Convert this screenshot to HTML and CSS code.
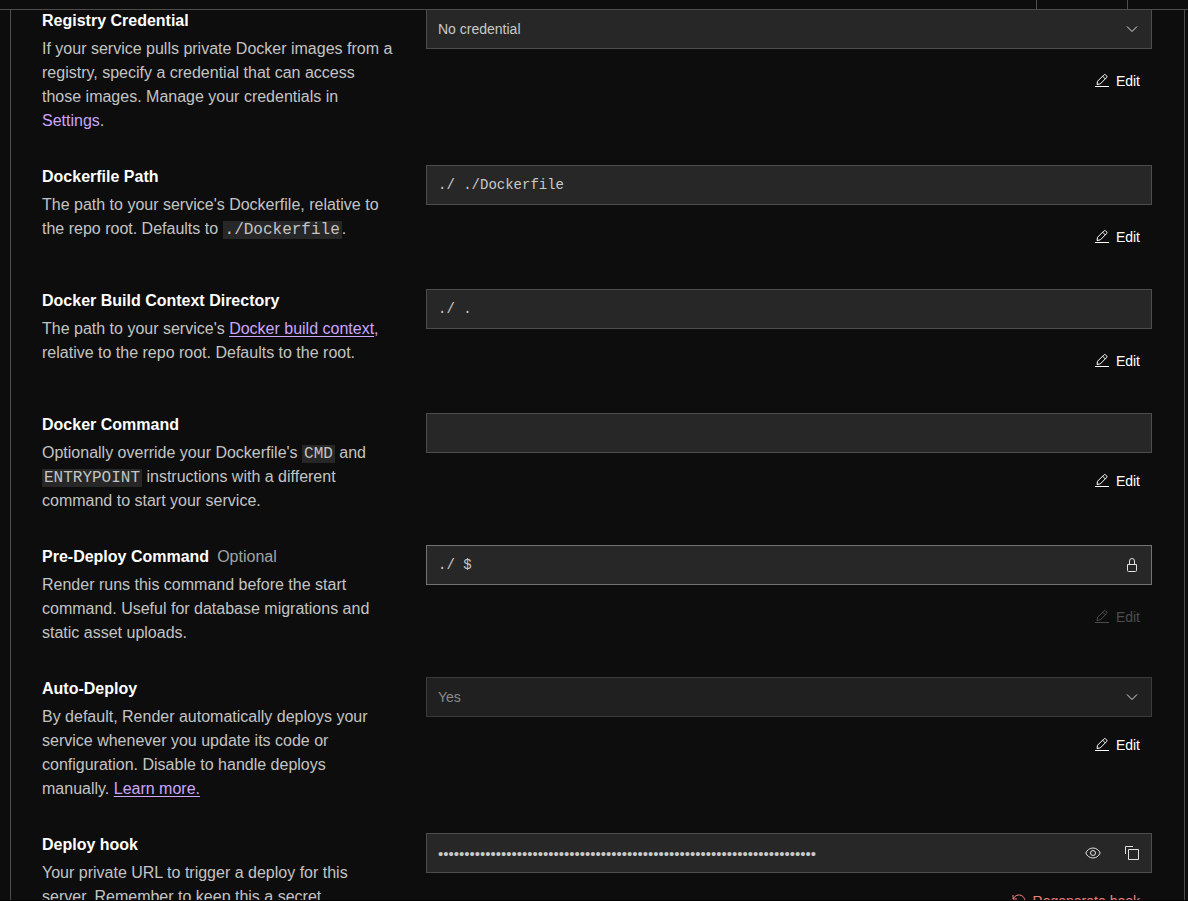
FILE: index.html
```
<!DOCTYPE html>
<html lang="en">
<head>
<meta charset="utf-8">
<meta name="viewport" content="width=device-width, initial-scale=1">
<title>Service settings</title>
<link rel="stylesheet" href="styles.css">
</head>
<body>
<svg class="sprite" aria-hidden="true">
  <symbol id="pencil" viewBox="0 0 16 16"><path d="M1 13.500h14M3 11.500l.6-3.300 6.300-6.300a1.200 1.200 0 0 1 1.700 0l1 1a1.200 1.200 0 0 1 0 1.700l-6.300 6.300zM8.600 3.200l2.700 2.700"/></symbol>
  <symbol id="chevron" viewBox="0 0 16 16"><path d="M3 5.500l5 5 5-5"/></symbol>
  <symbol id="lock" viewBox="0 0 16 16"><path d="M3.500 7.500h9v6a1 1 0 0 1-1 1h-7a1 1 0 0 1-1-1zM5.500 7.500V4a2.500 2.500 0 0 1 5 0v3.500"/></symbol>
  <symbol id="eye" viewBox="0 0 16 16"><path d="M.8 8C2 5 4.800 3 8 3s6 2 7.200 5C14 11 11.200 13 8 13S2 11 .8 8z"/><circle cx="8" cy="8" r="2.500"/></symbol>
  <symbol id="copy" viewBox="0 0 16 16"><path d="M4.500 4.500h10v10h-10zM1.500 9V1.500H9"/></symbol>
  <symbol id="reload" viewBox="0 0 16 16"><path d="M2 2v4h4M2.300 5.800A6 6 0 1 1 3.500 12"/></symbol>
</svg>

<header class="topbar"><div class="topbar-item"></div></header>

<main class="viewport">
  <form class="panel">
    <section class="row">
      <div class="info">
        <label class="title" for="registry">Registry Credential</label>
        <p class="text">If your service pulls private Docker images from a registry, specify a credential that can access those images. Manage your credentials in <a class="link plain" href="#settings">Settings</a>.</p>
      </div>
      <div class="control">
        <div class="field pick">
          <select class="value" id="registry"><option>No credential</option></select>
          <svg class="icon chevron"><use href="#chevron"/></svg>
        </div>
        <button class="action" type="button"><svg class="icon"><use href="#pencil"/></svg>Edit</button>
      </div>
    </section>

    <section class="row">
      <div class="info">
        <label class="title" for="dockerfile">Dockerfile Path</label>
        <p class="text">The path to your service's Dockerfile, relative to the repo root. Defaults to <code class="code">./Dockerfile</code>.</p>
      </div>
      <div class="control">
        <div class="field"><input class="value mono" id="dockerfile" value="./ ./Dockerfile" readonly></div>
        <button class="action" type="button"><svg class="icon"><use href="#pencil"/></svg>Edit</button>
      </div>
    </section>

    <section class="row">
      <div class="info">
        <label class="title" for="context">Docker Build Context Directory</label>
        <p class="text">The path to your service's <a class="link" href="#context-docs">Docker build context</a><span class="accent">,</span> relative to the repo root. Defaults to the root.</p>
      </div>
      <div class="control">
        <div class="field"><input class="value mono" id="context" value="./ ." readonly></div>
        <button class="action" type="button"><svg class="icon"><use href="#pencil"/></svg>Edit</button>
      </div>
    </section>

    <section class="row">
      <div class="info">
        <label class="title" for="command">Docker Command</label>
        <p class="text">Optionally override your Dockerfile's <code class="code">CMD</code> and <code class="code">ENTRYPOINT</code> instructions with a different command to start your service.</p>
      </div>
      <div class="control tight">
        <div class="field"><input class="value mono" id="command" readonly></div>
        <button class="action" type="button"><svg class="icon"><use href="#pencil"/></svg>Edit</button>
      </div>
    </section>

    <section class="row">
      <div class="info">
        <div class="heading"><label class="title" for="predeploy">Pre-Deploy Command</label><span class="optional">Optional</span></div>
        <p class="text">Render runs this command before the start command. Useful for database migrations and static asset uploads.</p>
      </div>
      <div class="control">
        <div class="field locked">
          <input class="value mono" id="predeploy" value="./ $" readonly>
          <svg class="icon trailing"><use href="#lock"/></svg>
        </div>
        <button class="action" type="button" disabled><svg class="icon"><use href="#pencil"/></svg>Edit</button>
      </div>
    </section>

    <section class="row">
      <div class="info">
        <label class="title" for="autodeploy">Auto-Deploy</label>
        <p class="text">By default, Render automatically deploys your service whenever you update its code or configuration. Disable to handle deploys manually. <a class="link" href="#deploy-docs">Learn more.</a></p>
      </div>
      <div class="control tight">
        <div class="field pick muted">
          <select class="value" id="autodeploy" disabled><option>Yes</option></select>
          <svg class="icon chevron"><use href="#chevron"/></svg>
        </div>
        <button class="action" type="button"><svg class="icon"><use href="#pencil"/></svg>Edit</button>
      </div>
    </section>

    <section class="row">
      <div class="info">
        <label class="title" for="hook">Deploy hook</label>
        <p class="text">Your private URL to trigger a deploy for this server. Remember to keep this a secret.</p>
      </div>
      <div class="control tight">
        <div class="field">
          <input class="value secret" type="password" id="hook" value="https://api.example.com/deploy/srv-0123456789abcdefghij?key=abcdefghijkl" readonly>
          <button class="icon-button" type="button" aria-label="Show deploy hook"><svg class="icon"><use href="#eye"/></svg></button>
          <button class="icon-button" type="button" aria-label="Copy deploy hook"><svg class="icon"><use href="#copy"/></svg></button>
        </div>
        <button class="action danger" type="button"><svg class="icon"><use href="#reload"/></svg>Regenerate hook</button>
      </div>
    </section>
  </form>
</main>
</body>
</html>
```

FILE: styles.css
```
* { box-sizing: border-box; }

body {
  margin: 0;
  height: 100vh;
  display: flex;
  flex-direction: column;
  overflow: hidden;
  background: #0d0d0d;
  color: #c4c4c4;
  border-bottom: 1px solid #000;
  font-family: "Liberation Sans", Arial, sans-serif;
  font-size: 16px;
  line-height: 24px;
}

.sprite { position: absolute; width: 0; height: 0; }

.topbar {
  flex: none;
  height: 10px;
  display: flex;
  justify-content: flex-end;
  padding-right: 60px;
  border-bottom: 1px solid #4d4d4d;
}

.topbar-item {
  width: 92px;
  border: solid #4d4d4d;
  border-width: 0 1px;
}

.viewport {
  flex: 1;
  min-height: 0;
  overflow: hidden;
  padding: 0 3px 0 10px;
}

.panel {
  display: flex;
  flex-direction: column;
  gap: 32px;
  margin-top: -1px;
  padding: 0 32px 32px 31px;
  border: solid #4d4d4d;
  border-width: 0 1px;
}

.row {
  display: grid;
  grid-template-columns: minmax(0, 1fr) minmax(0, 2fr);
  gap: 21px;
}

.info {
  display: flex;
  flex-direction: column;
  gap: 4px;
  padding-right: 12px;
}

.heading { display: flex; gap: 8px; }
.title { color: #fff; font-weight: 700; }
.optional { color: #a3a3a3; }
.text { margin: 0; }

.link { color: #cba6ff; text-decoration: underline; text-underline-offset: 2px; }
.plain { text-decoration: none; }
.accent { color: #cba6ff; }

.code {
  padding: 0 2px;
  background: #272727;
  font-family: "Liberation Mono", monospace;
  font-size: 16px;
  line-height: 20px;
}

.control {
  display: flex;
  flex-direction: column;
  align-items: flex-end;
  gap: 12px;
}

.tight { gap: 8px; margin-bottom: -32px; }

.field {
  align-self: stretch;
  height: 40px;
  display: flex;
  align-items: center;
  background: #272727;
  border: 1px solid #4d4d4d;
  color: #e0e0e0;
}

.locked { border-color: #737373; }
.muted { background: #202020; border-color: #3b3b3b; }

.value {
  flex: 1;
  min-width: 0;
  height: 38px;
  margin: 0;
  padding: 0 11px;
  border: 0;
  outline: 0;
  appearance: none;
  background: none;
  color: #c9c9c9;
  font: 14px "Liberation Sans", Arial, sans-serif;
}

.mono { font-family: "Liberation Mono", monospace; }
.secret { font-size: 15px; }
.muted .value { color: #8a8a8a; opacity: 1; }

.pick { display: grid; }
.pick .value, .pick .icon { grid-area: 1 / 1; }
.chevron { justify-self: end; margin-right: 11px; pointer-events: none; }
.trailing { margin-right: 11px; }

.icon {
  flex: none;
  width: 16px;
  height: 16px;
  fill: none;
  stroke: currentColor;
  stroke-width: 1;
}

.icon-button {
  width: 40px;
  height: 38px;
  display: grid;
  place-items: center;
  padding: 0;
  border: 0;
  background: none;
  color: #e0e0e0;
}

.icon-button:last-child { width: 38px; }

.action {
  height: 40px;
  display: flex;
  align-items: center;
  gap: 6px;
  padding: 0 12px;
  border: 0;
  background: none;
  color: #fff;
  font: 14px "Liberation Sans", Arial, sans-serif;
}

.action:disabled { color: #4d4d4d; }
.danger { color: #f47f7b; }
```
